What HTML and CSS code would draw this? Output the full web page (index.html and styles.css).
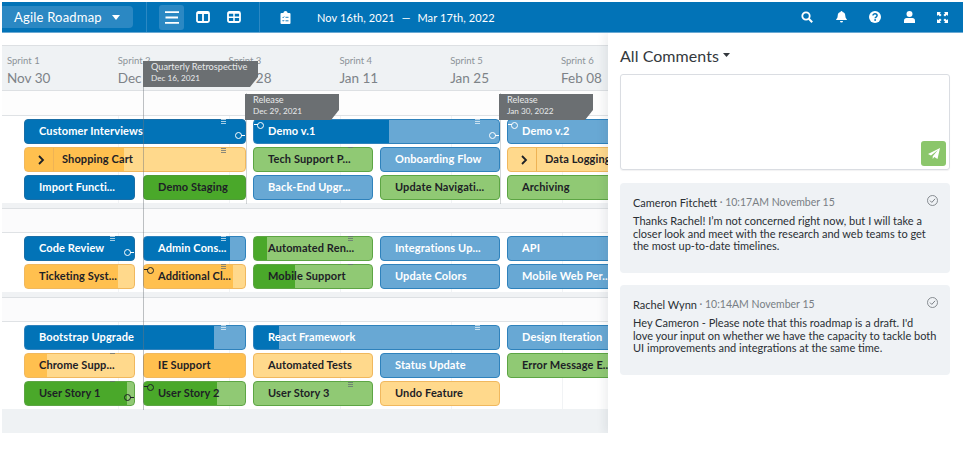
FILE: index.html
```html
<!DOCTYPE html>
<html lang="en">
<head>
<meta charset="utf-8">
<title>Agile Roadmap</title>
<link rel="stylesheet" href="styles.css">
</head>
<body>
<header class="topbar">
  <button class="plan-btn">Agile Roadmap <svg class="caret" viewBox="0 0 8 5" width="8" height="5"><path d="M0 0h8L4 5z" fill="#fff"/></svg></button>
  <div class="views">
    <span class="view active"><svg viewBox="0 0 14 13" width="14" height="13"><path d="M0 1.200h14M.5 6.500h12.500M0 11.800h14" stroke="#fff" stroke-width="1.800" fill="none"/></svg></span>
    <span class="view"><svg viewBox="0 0 14 12" width="14" height="12"><rect x="1" y="1" width="12" height="10" rx="1.500" stroke="#fff" stroke-width="1.800" fill="none"/><path d="M7 1v10M1 2h12" stroke="#fff" stroke-width="1.800"/></svg></span>
    <span class="view"><svg viewBox="0 0 14 12" width="14" height="12"><rect x="1" y="1" width="12" height="10" rx="1.500" stroke="#fff" stroke-width="1.800" fill="none"/><path d="M1 2h12M1 6.200h12M7 2v9" stroke="#fff" stroke-width="1.500"/></svg></span>
  </div>
  <div class="range">
    <svg viewBox="0 0 11 13" width="11" height="13"><path d="M1.500 2H3.500V1.500a2 1.500 0 0 1 4 0V2h2a1 1 0 0 1 1 1v9a1 1 0 0 1-1 1h-8a1 1 0 0 1-1-1V3a1 1 0 0 1 1-1z" fill="#fff"/><path d="M2.500 6l.7.7 1-1.200M2.500 9.500l.7.7 1-1.200M5.500 6.300h3M5.500 9.800h3" stroke="#0273b7" stroke-width=".9" fill="none"/></svg>
    <span class="dates">Nov 16th, 2021<span class="dash">—</span>Mar 17th, 2022</span>
  </div>
  <nav class="tools">
    <svg viewBox="0 0 12 12" width="12" height="12"><circle cx="5" cy="5" r="3.700" stroke="#fff" stroke-width="1.800" fill="none"/><path d="M7.800 7.800l3.400 3.400" stroke="#fff" stroke-width="2"/></svg>
    <svg viewBox="0 0 11 12" width="11" height="12"><path d="M5.500 0a1 1 0 0 1 1 1c2 .4 2.800 2 2.800 3.800 0 2.600 1.700 3.400 1.700 4.200H0c0-.8 1.700-1.600 1.700-4.200C1.700 3 2.500 1.400 4.500 1a1 1 0 0 1 1-1zM4 10h3a1.500 1.500 0 0 1-3 0z" fill="#fff"/></svg>
    <svg viewBox="0 0 12 12" width="12" height="12"><circle cx="6" cy="6" r="6" fill="#fff"/><path d="M4 4.600C4 3.400 5 2.800 6 2.800s2.100.6 2.100 1.800c0 1.500-1.900 1.500-1.900 2.700" stroke="#0273b7" stroke-width="1.500" fill="none"/><rect x="5.300" y="8.200" width="1.700" height="1.600" fill="#0273b7"/></svg>
    <svg viewBox="0 0 11 12" width="11" height="12"><circle cx="5.500" cy="3" r="3" fill="#fff"/><path d="M0 12V9.500C0 8 1.200 7 2.500 7h6C9.800 7 11 8 11 9.500V12z" fill="#fff"/></svg>
    <svg viewBox="0 0 11 11" width="11" height="11"><path d="M0 0h4L2.800 1.200 4.600 3 3 4.600 1.200 2.800 0 4zM11 0v4L9.800 2.800 8 4.600 6.400 3l1.800-1.800L7 0zM0 11V7l1.200 1.200L3 6.400 4.600 8 2.800 9.800 4 11zM11 11H7l1.200-1.200L6.400 8 8 6.400l1.800 1.800L11 7z" fill="#fff"/></svg>
  </nav>
</header>

<main class="workspace">
  <section class="timeline">
    <div class="sprints">
      <div class="sprint"><small>Sprint 1</small><b>Nov 30</b></div>
      <div class="sprint"><small>Sprint 2</small><b>Dec 14</b></div>
      <div class="sprint"><small>Sprint 3</small><b>Dec 28</b></div>
      <div class="sprint"><small>Sprint 4</small><b>Jan 11</b></div>
      <div class="sprint"><small>Sprint 5</small><b>Jan 25</b></div>
      <div class="sprint"><small>Sprint 6</small><b>Feb 08</b></div>
    </div>
    <div class="milestones"></div>

    <div class="lane">
      <div class="bar blue s12"><span>Customer Interviews</span><i class="grip"></i><i class="dot out"></i></div>
      <div class="bar blue-l s34 prog" style="--p:55%"><span>Demo v.1</span><i class="grip"></i><i class="dot in"></i><i class="dot out"></i></div>
      <div class="bar blue-l c5"><span>Demo v.2</span><i class="dot in"></i></div>
      <div class="bar orange-l s12 prog dark chevron" style="--p:45%"><em class="chev"><svg viewBox="0 0 7 10" width="7" height="10"><path d="M1 1l4 4-4 4" stroke="#1d2126" stroke-width="1.800" fill="none"/></svg></em><span>Shopping Cart</span><i class="grip tall"></i></div>
      <div class="bar green-l c3 dark"><span>Tech Support P...</span><i class="grip thin"></i></div>
      <div class="bar blue-l c4"><span>Onboarding Flow</span></div>
      <div class="bar orange-l c5 dark chevron"><em class="chev"><svg viewBox="0 0 7 10" width="7" height="10"><path d="M1 1l4 4-4 4" stroke="#1d2126" stroke-width="1.800" fill="none"/></svg></em><span>Data Logging</span></div>
      <div class="bar blue c1"><span>Import Functi...</span></div>
      <div class="bar green c2 dark"><span>Demo Staging</span></div>
      <div class="bar blue-l c3"><span>Back-End Upgr...</span></div>
      <div class="bar green-l c4 dark"><span>Update Navigati...</span></div>
      <div class="bar green-l c5 dark"><span>Archiving</span></div>
    </div>
    <div class="gap"></div>

    <div class="lane">
      <div class="bar blue c1"><span>Code Review</span><i class="grip"></i><i class="dot out"></i></div>
      <div class="bar blue-l c2 prog" style="--p:85%"><span>Admin Cons...</span><i class="grip"></i></div>
      <div class="bar green-l c3 prog dark" style="--p:11%"><span>Automated Ren...</span><i class="grip"></i></div>
      <div class="bar blue-l c4"><span>Integrations Up...</span></div>
      <div class="bar blue-l c5"><span>API</span></div>
      <div class="bar orange-l c1 prog dark" style="--p:85%"><span>Ticketing Syst...</span></div>
      <div class="bar orange-l c2 prog dark" style="--p:88%"><span>Additional Cl...</span><i class="grip"></i><i class="dot in"></i></div>
      <div class="bar green-l c3 prog dark" style="--p:35%"><span>Mobile Support</span><i class="grip thin"></i></div>
      <div class="bar blue-l c4"><span>Update Colors</span></div>
      <div class="bar blue-l c5"><span>Mobile Web Per...</span></div>
    </div>
    <div class="gap"></div>

    <div class="lane">
      <div class="bar blue-l s12 prog" style="--p:86%"><span>Bootstrap Upgrade</span><i class="grip"></i></div>
      <div class="bar blue-l s34 prog" style="--p:10%"><span>React Framework</span><i class="grip"></i></div>
      <div class="bar blue-l c5"><span>Design Iteration</span></div>
      <div class="bar orange-l c1 prog dark" style="--p:20%"><span>Chrome Supp...</span><i class="grip thin"></i></div>
      <div class="bar orange c2 dark"><span>IE Support</span></div>
      <div class="bar orange-l c3 dark"><span>Automated Tests</span></div>
      <div class="bar blue-l c4"><span>Status Update</span></div>
      <div class="bar green-l c5 dark"><span>Error Message E...</span></div>
      <div class="bar green-l c1 prog dark" style="--p:94%"><span>User Story 1</span><i class="grip thin"></i><i class="dot out"></i></div>
      <div class="bar green-l c2 prog dark" style="--p:72%"><span>User Story 2</span><i class="dot in"></i></div>
      <div class="bar green-l c3 dark"><span>User Story 3</span><i class="grip tall"></i></div>
      <div class="bar orange-l c4 dark"><span>Undo Feature</span></div>
    </div>
    <div class="foot"></div>

    <i class="vline today"></i>
    <i class="vline rel-a"></i>
    <i class="vline rel-b"></i>
    <div class="flag flag-q"><span>Quarterly Retrospective</span><small>Dec 16, 2021</small></div>
    <div class="flag flag-a"><span>Release</span><small>Dec 29, 2021</small></div>
    <div class="flag flag-b"><span>Release</span><small>Jan 30, 2022</small></div>
  </section>

  <aside class="panel">
    <h2 class="panel-title">All Comments <svg viewBox="0 0 7 4" width="7" height="4"><path d="M0 0h7L3.500 4z" fill="#33383d"/></svg></h2>
    <div class="composer">
      <button class="send"><svg viewBox="0 0 12 12" width="12" height="12"><path d="M12 0L9.500 11 6.300 8.900 4.700 11V8.200L10 2 3 7.500 0 6z" fill="#fff"/></svg></button>
    </div>
    <article class="comment">
      <header class="meta"><span class="who">Cameron Fitchett</span><span class="when"> · 10:17AM November 15</span>
        <svg class="tick" viewBox="0 0 11 11" width="11" height="11"><circle cx="5.500" cy="5.500" r="5" stroke="#6d7378" stroke-width=".8" fill="none"/><path d="M3 5.600l1.800 1.800 3.300-3.600" stroke="#6d7378" stroke-width=".9" fill="none"/></svg></header>
      <p>Thanks Rachel! I’m not concerned right now, but I will take a<br>closer look and meet with the research and web teams to get<br>the most up-to-date timelines.</p>
    </article>
    <article class="comment">
      <header class="meta"><span class="who">Rachel Wynn</span><span class="when"> · 10:14AM November 15</span>
        <svg class="tick" viewBox="0 0 11 11" width="11" height="11"><circle cx="5.500" cy="5.500" r="5" stroke="#6d7378" stroke-width=".8" fill="none"/><path d="M3 5.600l1.800 1.800 3.300-3.600" stroke="#6d7378" stroke-width=".9" fill="none"/></svg></header>
      <p>Hey Cameron - Please note that this roadmap is a draft. I'd<br>love your input on whether we have the capacity to tackle both<br>UI improvements and integrations at the same time.</p>
    </article>
  </aside>
</main>
</body>
</html>
```

FILE: styles.css
```css
* { box-sizing: border-box; }
html, body { height: 100%; }
body {
  margin: 0;
  padding: 2px 0 0 2px;
  background: #fff;
  overflow: hidden;
  font-family: Lato, "Noto Sans", sans-serif;
  color: #1d2126;
}

/* top bar */
.topbar {
  position: relative;
  z-index: 3;
  display: flex;
  align-items: center;
  height: 31px;
  background: #0273b7;
  color: #fff;
  border-bottom: 1px solid #6aa9d3;
}
.plan-btn {
  display: flex;
  align-items: center;
  justify-content: space-between;
  width: 131px;
  height: 22px;
  padding: 0 13px 0 12px;
  border: 0;
  border-radius: 0 4px 4px 0;
  background: #2b88c3;
  color: #fff;
  font: 400 13px Lato, sans-serif;
  letter-spacing: .2px;
}
.views {
  display: flex;
  align-items: center;
  gap: 6px;
  height: 30px;
  margin-left: 13px;
  padding: 0 13px 0 12px;
  border-left: 1px solid #2b88c3;
  border-right: 1px solid #2b88c3;
}
.view {
  display: flex;
  align-items: center;
  justify-content: center;
  width: 25px;
  height: 25px;
  border-radius: 3px;
}
.view.active { background: #2b88c3; }
.range {
  display: flex;
  align-items: center;
  gap: 26px;
  margin-left: 20px;
}
.dates { font-size: 11px; letter-spacing: .1px; white-space: nowrap; }
.dash { margin: 0 7px; }
.tools {
  display: flex;
  align-items: center;
  gap: 22.500px;
  margin-left: auto;
  padding-right: 15px;
}

/* layout */
.workspace { display: flex; height: 400px; }
.timeline {
  position: relative;
  width: 606px;
  flex: none;
  padding-top: 12px;
  overflow: hidden;
}

/* sprint header */
.sprints {
  display: flex;
  height: 46px;
  padding: 8px 0 0 5px;
  background: #eff2f4;
  border-top: 1px solid #dde0e3;
  border-bottom: 1px solid #dde0e3;
}
.sprint { flex: 0 0 110.800px; display: flex; flex-direction: column; }
.sprint small { font-size: 9.500px; line-height: 13px; color: #8c9298; }
.sprint b { font-size: 13.500px; font-weight: 400; line-height: 20px; margin-top: 1px; color: #7d8388; }
.milestones { height: 24px; background: #fdfdfd; }

/* swimlanes */
.lane {
  display: grid;
  grid-template-columns: 112px 103px 120px 120px 133px;
  grid-auto-rows: 25px;
  column-gap: 7px;
  row-gap: 3px;
  padding: 3px 0 3px 22px;
  border-top: 1px solid #dfe2e5;
  background-image: repeating-linear-gradient(90deg, transparent 0 110px, #f1f3f5 110px 111px);
  background-position: 6px 0;
}
.gap {
  height: 29px;
  padding-top: 5px;
  background: #f0f2f4;
}
.gap::after {
  content: "";
  display: block;
  height: 24px;
  border-top: 1px solid #dde0e3;
  background: #fbfbfc;
}
.foot { height: 24px; background: #eff2f4; }

/* bars */
.bar {
  position: relative;
  display: flex;
  align-items: center;
  min-width: 0;
  padding: 0 0 2px 14px;
  border: 1px solid var(--edge);
  border-radius: 4px;
  background: var(--light);
  background-origin: border-box;
  font-size: 11px;
  font-weight: 700;
  letter-spacing: .12px;
  color: #fff;
  white-space: nowrap;
}
.bar.chevron { padding-bottom: 0; }
.bar.chevron span { margin-bottom: 2px; }
.dark { color: #1d2126; }
.prog { background: linear-gradient(90deg, var(--full) var(--p), var(--light) var(--p)); }
.blue { --light: #0273b7; --edge: #1a6ea6; }
.blue-l { --full: #0273b7; --light: #68a8d4; --edge: #2f82bc; }
.green { --light: #4aa82a; --edge: #4f9c36; }
.green-l { --full: #4aa82a; --light: #90c974; --edge: #5da544; }
.orange { --light: #ffc04f; --edge: #f0b85e; }
.orange-l { --full: #ffc04f; --light: #ffd98c; --edge: #f0b85e; }
.c1 { grid-column: 1; margin-right: 1px; }
.c2 { grid-column: 2; }
.c3 { grid-column: 3; }
.c4 { grid-column: 4; }
.c5 { grid-column: 5; }
.s12 { grid-column: 1 / 3; }
.s34 { grid-column: 3 / 5; }
.chev {
  flex: none;
  display: flex;
  align-items: center;
  justify-content: center;
  align-self: stretch;
  width: 29px;
  margin: 0 8px 0 -14px;
  padding-left: 5px;
  border-right: 1px solid #eeb355;
}
.grip {
  position: absolute;
  top: -1px;
  right: 19px;
  width: 5px;
  height: 5px;
  background: repeating-linear-gradient(rgba(100,110,115,.75) 0 1px, transparent 1px 2px);
}
.blue .grip, .blue-l .grip {
  background: repeating-linear-gradient(rgba(255,255,255,.65) 0 1px, transparent 1px 2px);
}
.grip.tall { top: 0; height: 6px; }
.grip.thin { height: 1px; }
.dot {
  position: absolute;
  width: 7px;
  height: 7px;
  border: 1.300px solid currentColor;
  border-radius: 50%;
}
.dot::after {
  content: "";
  position: absolute;
  top: 1.700px;
  width: 4px;
  height: 1px;
  background: currentColor;
}
.dot.out { right: 3.500px; bottom: 4px; }
.dot.out::after { left: 100%; }
.dot.in { left: 2.500px; top: 1.500px; }
.dot.in::after { right: 100%; }

/* timeline overlays */
.vline {
  position: absolute;
  width: 1px;
  background: rgba(110,118,124,.45);
}
.today { left: 141px; top: 28px; height: 349px; }
.rel-a { left: 243.500px; top: 60px; height: 111px; background: rgba(110,118,124,.3); }
.rel-b { left: 497.500px; top: 60px; height: 111px; background: rgba(110,118,124,.3); }
.flag {
  position: absolute;
  display: flex;
  flex-direction: column;
  height: 26px;
  padding-left: 8px;
  background: #6b6f72;
  color: #e8eaeb;
  clip-path: polygon(0 0, 100% 0, 100% 62%, calc(100% - 8px) 100%, 0 100%);
}
.flag span { font-size: 9.200px; line-height: 12px; }
.flag small { font-size: 8.200px; line-height: 11px; }
.flag-q { left: 141px; top: 28px; width: 115px; }
.flag-a { left: 243px; top: 61px; width: 94px; }
.flag-b { left: 497px; top: 61px; width: 94px; }

/* comments */
.panel {
  position: relative;
  z-index: 2;
  flex: 1;
  padding: 0 13px 0 12px;
  background: #fff;
  box-shadow: -4px 0 8px rgba(30,40,50,.07);
  clip-path: inset(0 0 0 -12px);
}
.panel-title {
  display: flex;
  align-items: center;
  gap: 4px;
  height: 41px;
  margin: 0;
  padding-top: 3px;
  font-size: 16px;
  font-weight: 400;
  letter-spacing: .05px;
  color: #33383d;
}
.composer {
  display: flex;
  align-items: flex-end;
  justify-content: flex-end;
  height: 96px;
  padding: 0 3px 3px 0;
  border: 1px solid #dadde2;
  border-radius: 3px;
  box-shadow: 0 1px 1px rgba(30,40,50,.06);
}
.send {
  display: flex;
  align-items: center;
  justify-content: center;
  width: 25px;
  height: 25px;
  padding: 0;
  border: 0;
  border-radius: 3px;
  background: #8bc66b;
}
.comment {
  height: 90px;
  margin-top: 12px;
  padding: 12px 13px 0;
  border-radius: 4px;
  background: #eff2f5;
  font-size: 11px;
}
.composer + .comment { margin-top: 13px; }
.meta { display: flex; align-items: center; height: 14px; white-space: pre; }
.who { color: #2a2f34; }
.when { color: #787e84; font-size: 10.500px; }
.tick { margin-left: auto; margin-right: -1px; margin-top: -4px; }
.comment p {
  margin: 6px 0 0;
  line-height: 12.500px;
  white-space: nowrap;
  color: #2a2f34;
}
```
